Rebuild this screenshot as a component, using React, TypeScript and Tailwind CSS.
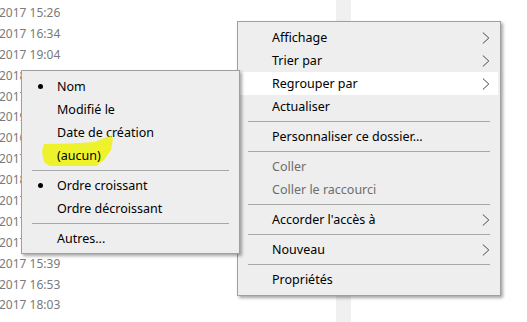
const dates = [
  "2017 15:26",
  "2017 16:34",
  "2017 19:04",
  "2018 09:12",
  "2017 11:47",
  "2019 14:05",
  "2016 10:22",
  "2017 17:30",
  "2018 08:41",
  "2017 13:16",
  "2017 12:09",
  "2017 15:02",
  "2017 15:39",
  "2017 16:53",
  "2017 18:03",
];

type Item =
  | { kind: "sep" }
  | { kind: "item"; label: string; sub?: boolean; disabled?: boolean; active?: boolean; bullet?: boolean; marked?: boolean };

const mainItems: Item[] = [
  { kind: "item", label: "Affichage", sub: true },
  { kind: "item", label: "Trier par", sub: true },
  { kind: "item", label: "Regrouper par", sub: true, active: true },
  { kind: "item", label: "Actualiser" },
  { kind: "sep" },
  { kind: "item", label: "Personnaliser ce dossier..." },
  { kind: "sep" },
  { kind: "item", label: "Coller", disabled: true },
  { kind: "item", label: "Coller le raccourci", disabled: true },
  { kind: "sep" },
  { kind: "item", label: "Accorder l'accès à", sub: true },
  { kind: "sep" },
  { kind: "item", label: "Nouveau", sub: true },
  { kind: "sep" },
  { kind: "item", label: "Propriétés" },
];

const groupItems: Item[] = [
  { kind: "item", label: "Nom", bullet: true },
  { kind: "item", label: "Modifié le" },
  { kind: "item", label: "Date de création" },
  { kind: "item", label: "(aucun)", marked: true },
  { kind: "sep" },
  { kind: "item", label: "Ordre croissant", bullet: true },
  { kind: "item", label: "Ordre décroissant" },
  { kind: "sep" },
  { kind: "item", label: "Autres..." },
];

function Chevron() {
  return (
    <svg width="8" height="12" viewBox="0 0 8 12" className="shrink-0">
      <polyline points="0.8,0.5 6.8,6 0.8,11.5" fill="none" stroke="#4a4a4a" strokeWidth="1" />
    </svg>
  );
}

function MenuRow({ item, textPad }: { item: Item; textPad: string }) {
  if (item.kind === "sep") {
    return (
      <div className="h-[7px] flex items-center px-[8px]">
        <div className="h-px w-full bg-[#a7a7a7]" />
      </div>
    );
  }
  return (
    <div
      className={`relative h-[23px] flex items-center pr-[8px] ${textPad} ${item.active ? "bg-white" : ""} ${
        item.disabled ? "text-[#6d6d6d]" : "text-black"
      }`}
    >
      {item.bullet && <span className="absolute left-[14px] top-[9px] w-[5px] h-[5px] rounded-full bg-black" />}
      {item.marked && (
        // yellow highlighter stroke over "(aucun)"
        <svg className="absolute left-[18px] top-[-8px]" width="72" height="31" viewBox="0 0 72 31">
          <polygon
            points="2,8 28,7.5 53,6 62,2 69,0 71,3 69,14 62,24 54,30 8,30 2,26 0,16"
            fill="#eef22c"
          />
        </svg>
      )}
      <span className="relative flex-1 whitespace-nowrap pt-px">{item.label}</span>
      {item.sub && <Chevron />}
    </div>
  );
}

export default function App() {
  return (
    <div
      className="relative w-[527px] h-[322px] overflow-hidden bg-white text-[12px] leading-none"
      style={{ fontFamily: '"Noto Sans", "Open Sans", sans-serif' }}
    >
      <div className="flex h-full">
        <div className="w-[337px] pt-[2.5px] ml-[-1px] text-[#7a7a7a]">
          {dates.map((d, i) => (
            <div key={i} className="h-[20.9px] flex items-center whitespace-nowrap">
              {d}
            </div>
          ))}
        </div>
        <div className="w-[15px] h-full bg-[#f0f0f0]" />
      </div>

      {/* main context menu */}
      <div className="absolute left-[237px] top-[21px] w-[264px] border border-[#a0a0a0] bg-[#eeeeee] px-[2px] pt-[4px] pb-[4px] text-[12.5px] shadow-[2px_2px_3px_rgba(0,0,0,0.35)]">
        {mainItems.map((it, i) => (
          <MenuRow key={i} item={it} textPad="pl-[32px]" />
        ))}
      </div>

      {/* Regrouper par submenu */}
      <div className="absolute left-[21px] top-[70px] w-[219px] border border-[#a0a0a0] bg-[#eeeeee] px-[2px] pt-[4px] pb-[3px] text-[12.5px] shadow-[2px_2px_3px_rgba(0,0,0,0.35)]">
        {groupItems.map((it, i) => (
          <MenuRow key={i} item={it} textPad="pl-[33px]" />
        ))}
      </div>
    </div>
  );
}
